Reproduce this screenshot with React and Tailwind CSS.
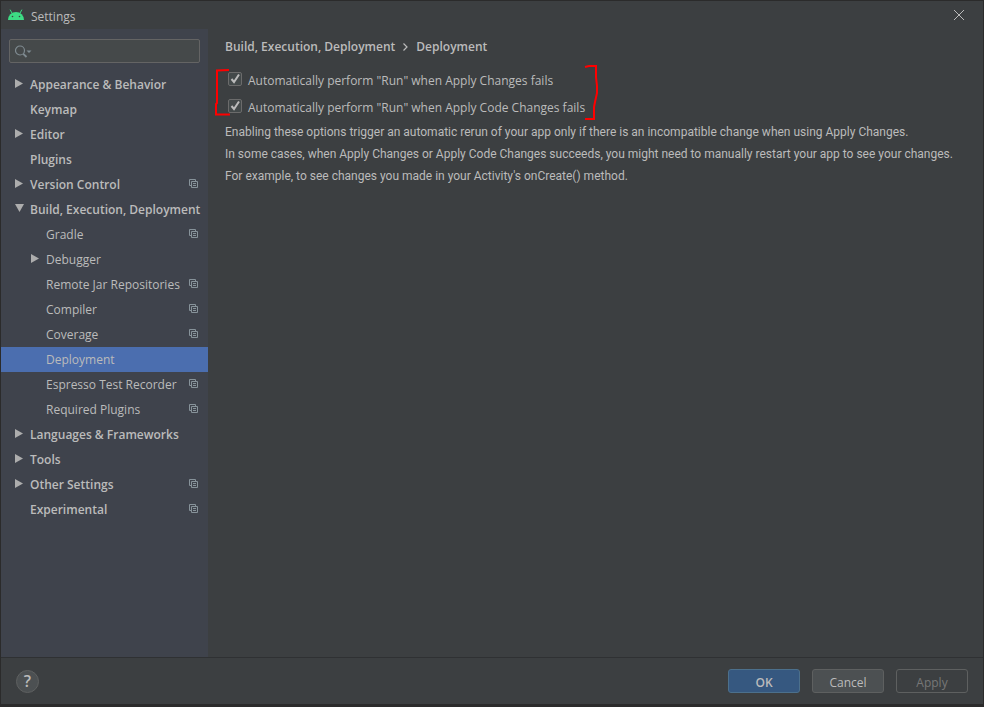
import React, { useState } from 'react';

const items = [
  { name: 'Appearance & Behavior', bold: true, arrow: 'right' },
  { name: 'Keymap', bold: true },
  { name: 'Editor', bold: true, arrow: 'right' },
  { name: 'Plugins', bold: true },
  { name: 'Version Control', bold: true, arrow: 'right', project: true },
  { name: 'Build, Execution, Deployment', bold: true, arrow: 'down' },
  { name: 'Gradle', child: true, project: true },
  { name: 'Debugger', child: true, arrow: 'right' },
  { name: 'Remote Jar Repositories', child: true, project: true },
  { name: 'Compiler', child: true, project: true },
  { name: 'Coverage', child: true, project: true },
  { name: 'Deployment', child: true },
  { name: 'Espresso Test Recorder', child: true, project: true },
  { name: 'Required Plugins', child: true, project: true },
  { name: 'Languages & Frameworks', bold: true, arrow: 'right' },
  { name: 'Tools', bold: true, arrow: 'right' },
  { name: 'Other Settings', bold: true, arrow: 'right', project: true },
  { name: 'Experimental', bold: true, project: true },
];

const AndroidIcon = () => (
  <svg width="16" height="12" viewBox="0 0 16 12" aria-hidden="true">
    <path d="M0 11a8 8 0 0 1 16 0z" fill="#3ddc84" />
    <path d="M4.200 4.500L2.300 1M11.800 4.500L13.700 1" stroke="#3ddc84" strokeWidth="1" strokeLinecap="round" />
    <circle cx="4.500" cy="7.500" r=".8" fill="#3c3f41" />
    <circle cx="11.500" cy="7.500" r=".8" fill="#3c3f41" />
  </svg>
);

const Arrow = ({ type }) => (
  <svg className="shrink-0" width="9" height="11" viewBox="0 0 9 11" fill="#adadad" aria-hidden="true">
    {type === 'right' && <path d="M0 0L8 4.500L0 9z" />}
    {type === 'down' && <path d="M0 0H9L4.500 8z" />}
  </svg>
);

const ProjectIcon = () => (
  <svg className="shrink-0" width="9" height="11" viewBox="0 0 9 11" fill="none" stroke="#87939a" aria-hidden="true">
    <path d="M2 6.500H.5V.5H6.500V2M2.500 2.500H8.500V8.500H2.500zM4 4.500H7M4 6.500H7" />
  </svg>
);

const CheckOption = ({ label }) => {
  const [checked, setChecked] = useState(true);

  return (
    <label className="flex h-[27px] items-center gap-1.5">
      <span className="grid h-[17px] w-[14px]">
        <input
          type="checkbox"
          checked={checked}
          onChange={(e) => setChecked(e.target.checked)}
          className="col-start-1 row-start-1 h-[14px] w-[14px] appearance-none rounded-[2px] border border-[#6b6b6b] bg-[#43494a]"
        />
        {checked && (
          <svg className="pointer-events-none col-start-1 row-start-1" width="14" height="14" viewBox="0 0 14 14" fill="none" stroke="#bbbbbb" strokeWidth="2" aria-hidden="true">
            <path d="M3.500 7L6 10L11 2.500" />
          </svg>
        )}
      </span>
      {label}
    </label>
  );
};

const App = () => {
  const [selected, setSelected] = useState('Deployment');
  const [search, setSearch] = useState('');

  return (
    <div className="flex min-h-screen flex-col border border-b-3 border-[#2b2b2b] bg-[#3c3f41] font-['Open_Sans','Noto_Sans',sans-serif] text-xs leading-5 text-[#bbbbbb]">
      {/* Title bar */}
      <header className="flex h-7 items-center gap-[7px] pr-[19px] pl-[7px]">
        <AndroidIcon />
        <h1 className="flex-1 pt-1">Settings</h1>
        <button aria-label="Close">
          <svg width="10" height="10" viewBox="0 0 10 10" stroke="#bbbbbb" aria-hidden="true">
            <path d="M0 0L10 10M10 0L0 10" />
          </svg>
        </button>
      </header>

      <div className="flex flex-1">
        {/* Sidebar */}
        <aside className="w-[207px] shrink-0 bg-[#3f434c] pt-[10px]">
          <div className="mx-2 mb-[9px] flex h-6 items-center rounded-[2px] border border-[#646464] bg-[#45494a] pl-[5px]">
            <svg width="17" height="13" viewBox="0 0 17 13" fill="none" stroke="#7f8b91" aria-hidden="true">
              <circle cx="5" cy="5.500" r="4.500" strokeWidth="1.200" />
              <path d="M8.300 8.800L11.500 12" strokeWidth="1.800" />
              <path d="M11.500 5.500H16.500L14 8z" fill="#7f8b91" stroke="none" />
            </svg>
            <input
              type="text"
              aria-label="Search settings"
              value={search}
              onChange={(e) => setSearch(e.target.value)}
              className="min-w-0 flex-1 bg-transparent px-1 outline-none"
            />
          </div>
          <nav>
            {items.map((item) => (
              <button
                key={item.name}
                onClick={() => setSelected(item.name)}
                className={`flex h-[25px] w-full items-center gap-1.5 pr-[10px] text-left whitespace-nowrap ${
                  item.child ? 'pl-[30px]' : 'pl-[14px]'
                } ${item.bold ? 'font-semibold' : ''} ${selected === item.name ? 'bg-[#4b6eaf]' : ''}`}
              >
                <Arrow type={item.arrow} />
                <span className="min-w-0 flex-1">{item.name}</span>
                {item.project && <ProjectIcon />}
              </button>
            ))}
          </nav>
        </aside>

        {/* Content */}
        <main className="min-w-0 flex-1 pl-[17px]">
          <h2 className="flex h-9 items-center font-semibold">
            Build, Execution, Deployment
            <svg className="mx-2" width="5" height="8" viewBox="0 0 5 8" fill="none" stroke="#bbbbbb" strokeWidth="1.200" aria-hidden="true">
              <path d="M.5 .5L4 4L.5 7.500" />
            </svg>
            Deployment
          </h2>
          <div className="relative mt-0.5 w-fit pl-[3px]">
            <CheckOption label={'Automatically perform "Run" when Apply Changes fails'} />
            <CheckOption label={'Automatically perform "Run" when Apply Code Changes fails'} />
            <svg className="pointer-events-none absolute top-0 -left-[11px]" width="16" height="54" viewBox="0 0 16 54" fill="none" stroke="#ff0000" strokeWidth="2" aria-hidden="true">
              <path d="M15 3L3 3.500V36L2 37V47.500H16" />
            </svg>
            <svg className="pointer-events-none absolute -top-1 -right-3.5" width="16" height="58" viewBox="0 0 16 58" fill="none" stroke="#ff0000" strokeWidth="2" aria-hidden="true">
              <path d="M2 4L6 3H13V14L14 23V30L12 39L11 44V56H2" />
            </svg>
          </div>
          <div className="font-[Roboto,sans-serif] leading-[22px]">
            <p>Enabling these options trigger an automatic rerun of your app only if there is an incompatible change when using Apply Changes.</p>
            <p>In some cases, when Apply Changes or Apply Code Changes succeeds, you might need to manually restart your app to see your changes.</p>
            <p>For example, to see changes you made in your Activity's onCreate() method.</p>
          </div>
        </main>
      </div>

      {/* Footer */}
      <footer className="flex h-[47px] items-center gap-3 border-t border-[#2f3133] px-[15px]">
        <button aria-label="Help" className="mr-auto h-[23px] w-[23px] rounded-full border border-[#5e6060] bg-[#4c5052] text-base leading-5 font-semibold">
          ?
        </button>
        <button className="h-6 w-[72px] rounded-[3px] border border-[#4c708c] bg-[#365880] pt-1 leading-4 font-semibold">OK</button>
        <button className="h-6 w-[72px] rounded-[3px] border border-[#5e6060] bg-[#4c5052] pt-1 leading-4">Cancel</button>
        <button disabled className="h-6 w-[72px] rounded-[3px] border border-[#5e6060] pt-1 leading-4 text-[#777777]">Apply</button>
      </footer>
    </div>
  );
};

export default App;
